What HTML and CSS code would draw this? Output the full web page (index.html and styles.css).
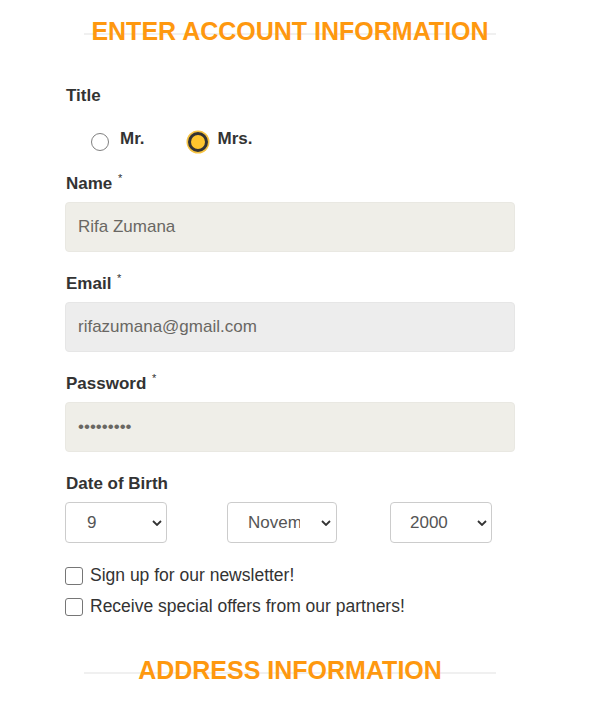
FILE: index.html
```html
<!DOCTYPE html>
<html lang="en">
<head>
<meta charset="utf-8">
<title>Enter Account Information</title>
<link rel="stylesheet" href="styles.css">
</head>
<body>
<form class="signup">
  <h2 class="section-title">ENTER ACCOUNT INFORMATION</h2>

  <div class="field title-field">
    <span class="label">Title</span>
    <div class="radio-group">
      <label class="radio"><input type="radio" name="title" value="Mr"><span>Mr.</span></label>
      <label class="radio"><input type="radio" name="title" value="Mrs" checked><span>Mrs.</span></label>
    </div>
  </div>

  <div class="field">
    <label class="label" for="name">Name <sup>*</sup></label>
    <input class="text-input" id="name" type="text" value="Rifa Zumana">
  </div>

  <div class="field">
    <label class="label" for="email">Email <sup>*</sup></label>
    <input class="text-input email" id="email" type="email" value="rifazumana@gmail.com">
  </div>

  <div class="field">
    <label class="label" for="password">Password <sup>*</sup></label>
    <input class="text-input" id="password" type="password" value="123456789">
  </div>

  <div class="field dob">
    <span class="label">Date of Birth</span>
    <div class="dob-row">
      <select class="select day"><option>9</option></select>
      <select class="select month"><option>November</option></select>
      <select class="select year"><option>2000</option></select>
    </div>
  </div>

  <div class="checks">
    <label class="check"><input type="checkbox"><span>Sign up for our newsletter!</span></label>
    <label class="check"><input type="checkbox"><span>Receive special offers from our partners!</span></label>
  </div>

  <h2 class="section-title address">ADDRESS INFORMATION</h2>
</form>
</body>
</html>
```

FILE: styles.css
```css
html, body {
  margin: 0;
  padding: 0;
  background: #ffffff;
}

body {
  font-family: "Liberation Sans", Arial, sans-serif;
  color: #333333;
}

.signup {
  width: 450px;
  margin-left: 65px;
  padding-top: 16px;
  display: flex;
  flex-direction: column;
}

.section-title {
  margin: 0 0 0 19px;
  width: 412px;
  height: 30px;
  font-size: 25px;
  line-height: 30px;
  font-weight: bold;
  color: #fe980f;
  text-align: center;
  background: linear-gradient(#f0f0f0, #f0f0f0) no-repeat 0 17px / 100% 2px;
}

.section-title.address {
  margin-top: 37px;
}

.label {
  display: block;
  height: 20px;
  overflow: visible;
  font-size: 17px;
  line-height: 20px;
  font-weight: bold;
  color: #333333;
  margin: 0 0 8px 1px;
}

.label sup {
  font-size: 11px;
  line-height: 0;
  font-weight: normal;
  vertical-align: 0;
  position: relative;
  top: -7px;
  margin-left: 1px;
}

.field {
  margin-top: 22px;
}

.title-field {
  margin-top: 40px;
}

.title-field .label {
  margin-bottom: 23px;
}

.radio-group {
  display: flex;
  gap: 44px;
  padding-left: 26px;
  height: 23px;
}

.radio {
  display: flex;
  align-items: flex-start;
  gap: 11px;
  font-size: 17px;
  line-height: 20px;
  font-weight: bold;
  color: #333333;
}

.radio input {
  appearance: none;
  -webkit-appearance: none;
  margin: 4px 0 0 0;
  width: 18px;
  height: 18px;
  box-sizing: border-box;
  border: 1px solid #808080;
  border-radius: 50%;
  background: #ffffff;
  flex: none;
}

.radio input:checked {
  width: 20px;
  height: 20px;
  margin: 3px 0 0 -1px;
  border: 3px solid #333333;
  background: #fec52e;
  box-shadow: 0 0 0 1.5px #f6c343;
}

.radio:last-child {
  gap: 10px;
}

.text-input {
  display: block;
  box-sizing: border-box;
  width: 450px;
  height: 50px;
  margin: 0;
  padding: 0 12px;
  border: 1px solid #e9e8e2;
  border-radius: 4px;
  background: #efeee8;
  font-family: "Liberation Sans", Arial, sans-serif;
  font-size: 17px;
  color: #696763;
  outline: none;
}

.text-input.email {
  background: #ededed;
  border-color: #e6e6e6;
}

.dob-row {
  display: flex;
  align-items: center;
  height: 41px;
}

.select {
  appearance: none;
  -webkit-appearance: none;
  box-sizing: border-box;
  height: 41px;
  margin: 0;
  padding: 0 30px 0 20px;
  border: 1px solid #cccccc;
  border-radius: 4px;
  background-color: #ffffff;
  background-image: url("data:image/svg+xml;utf8,<svg xmlns='http://www.w3.org/2000/svg' width='10' height='6' viewBox='0 0 10 6'><path d='M1 1 L5 5 L9 1' fill='none' stroke='%23333' stroke-width='1.8'/></svg>");
  background-repeat: no-repeat;
  background-position: right 4px center;
  background-size: 10px 6px;
  font-family: "Liberation Sans", Arial, sans-serif;
  font-size: 17px;
  color: #555555;
}

.select.day {
  width: 102px;
  padding-left: 21px;
}

.select.month {
  width: 110px;
  margin-left: 60px;
  padding-right: 36px;
  background-position: right 5px center;
}

.select.year {
  width: 102px;
  margin-left: 53px;
  padding-left: 19px;
}

.checks {
  margin-top: 20px;
  display: flex;
  flex-direction: column;
  gap: 7px;
}

.check {
  display: flex;
  align-items: center;
  gap: 7px;
  height: 24px;
  font-size: 17.5px;
  line-height: 24px;
  color: #333333;
}

.check input {
  appearance: none;
  -webkit-appearance: none;
  margin: 0;
  width: 18px;
  height: 18px;
  box-sizing: border-box;
  border: 1px solid #767676;
  border-radius: 3px;
  background: #ffffff;
  flex: none;
  position: relative;
  top: 1px;
}
```
